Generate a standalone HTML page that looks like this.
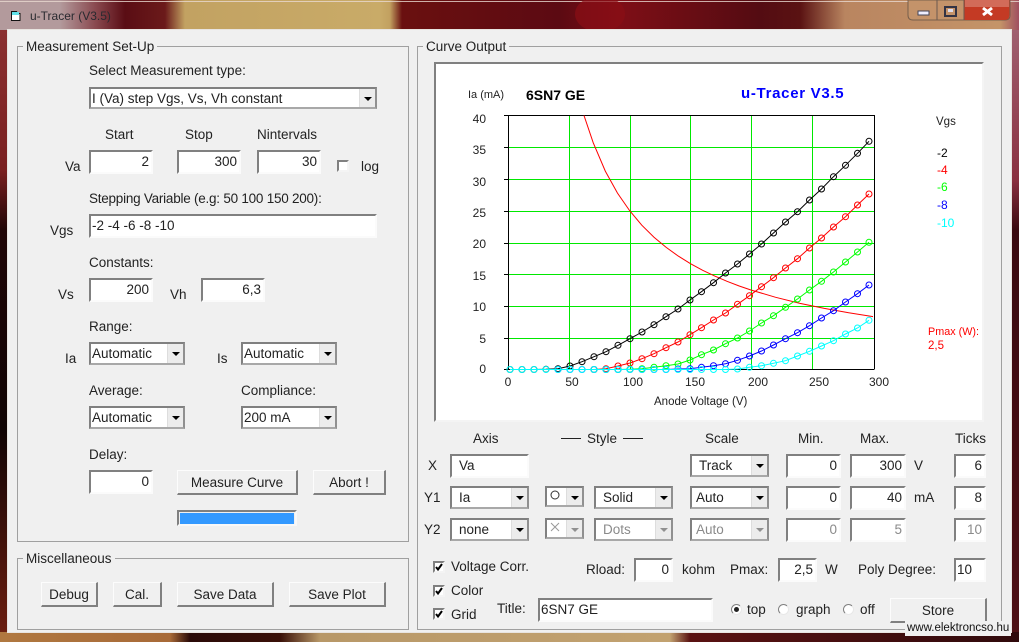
<!DOCTYPE html>
<html><head><meta charset="utf-8"><style>
html,body{margin:0;padding:0;background:#000}
#w{position:relative;width:1019px;height:642px;overflow:hidden;font-family:"Liberation Sans",sans-serif;font-size:13.5px;color:#222;
background:linear-gradient(90deg,#b39a9c 0,#b39a9c 60px,#8a4a50 95px,#5a0d14 125px,#6b1a1a 165px,#c2a262 185px,#c9ab68 380px,#c2a060 390px,#6a1010 402px,#5c0a12 560px,#7e0e16 620px,#540c12 760px,#5a1212 800px,#b98560 845px,#c49468 1000px,#a05060 1019px)}
#lb{position:absolute;left:0;top:30px;width:8px;height:612px;background:linear-gradient(180deg,#8a3030 0,#7a2020 140px,#200606 200px,#100404 400px,#6a1e10 600px,#b07040 642px)}
#rb{position:absolute;left:1011px;top:30px;width:8px;height:612px;background:linear-gradient(180deg,#a06070 0,#8a3040 150px,#3a0a10 200px,#501015 642px)}
#bb{position:absolute;left:0;top:632px;width:1019px;height:10px;background:linear-gradient(90deg,#b07840 0,#a86a38 170px,#2a0a08 190px,#3a1008 280px,#b89868 320px,#c2a270 670px,#5a1212 690px,#300a0c 1019px)}
#c{position:absolute;left:8px;top:30px;width:1003px;height:602px;background:#f0f0f0;box-shadow:0 0 0 1px #e8e4e0}
.t{position:absolute;white-space:nowrap;line-height:16px;margin-top:1px}
.g{position:absolute;box-sizing:border-box;border:1px solid #a0a0a0}
.l{position:absolute;background:#f0f0f0;padding:0 3px;line-height:16px;white-space:nowrap;margin-top:1px}
.i,.s{position:absolute;box-sizing:border-box;background:#fff;border:2px solid;border-color:#808080 #fbfbfb #fbfbfb #808080;line-height:19px;white-space:nowrap;overflow:hidden}
.i{text-align:right;padding-right:2px}
.s{border-color:#808080 #909090 #a8a8a8 #808080;padding-left:1px}
.b{position:absolute;right:0;top:0;bottom:0;width:16px;background:#ececec;border-left:1px solid #ddd;box-sizing:border-box}
.b:after{content:"";position:absolute;left:4px;top:8px;border:4px solid transparent;border-top:4px solid #000;border-bottom:0}
.d{color:#8a8a8a}.d .b:after{border-top-color:#909090}
.btn{position:absolute;box-sizing:border-box;background:#f0f0f0;border:1px solid;border-color:#fcfcfc #808080 #808080 #fcfcfc;border-width:1px 2px 2px 1px;text-align:center;line-height:23px;white-space:nowrap}
.cb{position:absolute;box-sizing:border-box;width:12px;height:12px;background:#fff;border:2px solid;border-color:#808080 #f4f4f4 #f4f4f4 #808080}
.r{position:absolute;box-sizing:border-box;width:11px;height:11px;border-radius:50%;background:#fff;border:1px solid;border-color:#808080 #e8e8e8 #e8e8e8 #808080}
.y{position:absolute;width:24px;text-align:right;left:462px;font-size:12px;line-height:14px}
.x{position:absolute;width:30px;text-align:center;top:375px;font-size:12px;line-height:14px}
</style></head><body><div id="w">
<div id="lb"></div><div id="rb"></div><div id="bb"></div>
<svg style="position:absolute;left:0;top:0" width="1019" height="30">
<path d="M0 1.5H1019" stroke="#e8d8d0" stroke-opacity=".8"/>
<path d="M11.5 11.5h5l1 2h2.5v7h-8.5z" fill="#fff" stroke="#111"/><rect x="12" y="12" width="7" height="3" fill="#5fe0e8"/>
<ellipse cx="600" cy="14" rx="25" ry="18" fill="#8a0e16" opacity=".7"/>
<path d="M908 0h102v15q0 5-5 5h-92q-5 0-5-5z" fill="#c4936a" stroke="#5a4a40" stroke-opacity=".7"/>
<path d="M964.5 0h45v15q0 5-5 5h-40z" fill="#c43a24"/><rect x="965" y="0" width="44" height="7" fill="#d88070" opacity=".7"/>
<path d="M937 0v20M964 0v20" stroke="#6a5a50"/>
<rect x="918" y="11" width="11" height="4" fill="#eef" stroke="#445"/>
<rect x="945" y="7" width="11" height="9" fill="none" stroke="#334" stroke-width="2"/><rect x="948" y="9" width="5" height="3" fill="#dde"/>
<path d="M983 8l9 7M992 8l-9 7" stroke="#fff" stroke-width="3"/>
</svg>
<div class="t" style="left:30px;top:7px;font-size:12px;color:#2a2a30">u-Tracer (V3.5)</div>
<div id="c"></div>

<div class="g" style="left:17px;top:46px;width:392px;height:496px"></div><div class="l" style="left:23px;top:38px">Measurement Set-Up</div>
<div class="g" style="left:17px;top:558px;width:392px;height:72px"></div><div class="l" style="left:23px;top:550px">Miscellaneous</div>
<div class="g" style="left:417px;top:46px;width:585px;height:584px"></div><div class="l" style="left:423px;top:38px">Curve Output</div>

<div class="t" style="left:89px;top:62px">Select Measurement type:</div>
<div class="s" style="left:89px;top:87px;width:288px;height:22px">I (Va) step Vgs, Vs, Vh constant<div class="b"></div></div>
<div class="t" style="left:105px;top:126px">Start</div><div class="t" style="left:185px;top:126px">Stop</div><div class="t" style="left:257px;top:126px">Nintervals</div>
<div class="t" style="left:65px;top:158px">Va</div>
<div class="i" style="left:89px;top:150px;width:64px;height:24px">2</div>
<div class="i" style="left:177px;top:150px;width:64px;height:24px">300</div>
<div class="i" style="left:257px;top:150px;width:64px;height:24px">30</div>
<div class="cb" style="left:337px;top:160px"></div><div class="t" style="left:361px;top:158px">log</div>
<div class="t" style="left:89px;top:190px;letter-spacing:-.24px">Stepping Variable (e.g: 50 100 150 200):</div>
<div class="t" style="left:50px;top:222px">Vgs</div>
<div class="i" style="left:89px;top:214px;width:288px;height:24px;text-align:left;padding-left:1px">-2 -4 -6 -8 -10</div>
<div class="t" style="left:89px;top:254px">Constants:</div>
<div class="t" style="left:58px;top:286px">Vs</div><div class="t" style="left:170px;top:286px">Vh</div>
<div class="i" style="left:89px;top:278px;width:64px;height:24px">200</div>
<div class="i" style="left:201px;top:278px;width:64px;height:24px">6,3</div>
<div class="t" style="left:89px;top:318px">Range:</div>
<div class="t" style="left:65px;top:350px">Ia</div><div class="t" style="left:217px;top:350px">Is</div>
<div class="s" style="left:89px;top:342px;width:96px;height:23px">Automatic<div class="b"></div></div>
<div class="s" style="left:241px;top:342px;width:96px;height:23px">Automatic<div class="b"></div></div>
<div class="t" style="left:89px;top:382px">Average:</div><div class="t" style="left:241px;top:382px">Compliance:</div>
<div class="s" style="left:89px;top:406px;width:96px;height:23px">Automatic<div class="b"></div></div>
<div class="s" style="left:241px;top:406px;width:96px;height:23px">200 mA<div class="b"></div></div>
<div class="t" style="left:89px;top:446px">Delay:</div>
<div class="i" style="left:89px;top:470px;width:64px;height:24px">0</div>
<div class="btn" style="left:177px;top:470px;width:121px;height:25px">Measure Curve</div>
<div class="btn" style="left:313px;top:470px;width:73px;height:25px">Abort !</div>
<div style="position:absolute;left:177px;top:510px;width:120px;height:16px;box-sizing:border-box;border:2px solid;border-color:#808080 #f8f8f8 #f8f8f8 #808080;background:#f0f0f0"><div style="position:absolute;left:1px;top:1px;width:114px;height:11px;background:#3399ff"></div></div>
<div class="btn" style="left:41px;top:582px;width:57px;height:25px">Debug</div>
<div class="btn" style="left:113px;top:582px;width:49px;height:25px">Cal.</div>
<div class="btn" style="left:177px;top:582px;width:97px;height:25px">Save Data</div>
<div class="btn" style="left:289px;top:582px;width:97px;height:25px">Save Plot</div>

<div style="position:absolute;left:434px;top:62px;width:550px;height:360px;box-sizing:border-box;background:#fff;border:2px solid;border-color:#808080 #f4f4f4 #f4f4f4 #808080"></div>
<svg style="position:absolute;left:0;top:0" width="1019" height="642">
<defs>
<marker id="mk" markerWidth="8" markerHeight="8" refX="4" refY="4" markerUnits="userSpaceOnUse"><circle cx="4" cy="4" r="3" fill="none" stroke="#000"/></marker>
<marker id="mr" markerWidth="8" markerHeight="8" refX="4" refY="4" markerUnits="userSpaceOnUse"><circle cx="4" cy="4" r="3" fill="none" stroke="#f00"/></marker>
<marker id="mg" markerWidth="8" markerHeight="8" refX="4" refY="4" markerUnits="userSpaceOnUse"><circle cx="4" cy="4" r="3" fill="none" stroke="#0f0"/></marker>
<marker id="mb" markerWidth="8" markerHeight="8" refX="4" refY="4" markerUnits="userSpaceOnUse"><circle cx="4" cy="4" r="3" fill="none" stroke="#00f"/></marker>
<marker id="mc" markerWidth="8" markerHeight="8" refX="4" refY="4" markerUnits="userSpaceOnUse"><circle cx="4" cy="4" r="3" fill="none" stroke="#0ff"/></marker>
</defs>
<g stroke="#00e800" fill="none" shape-rendering="crispEdges">
<path d="M569.5 116V369M630.5 116V369M690.5 116V369M751.5 116V369M812.5 116V369M508 147.5H874M508 179.5H874M508 211.5H874M508 243.5H874M508 274.5H874M508 306.5H874M508 338.5H874"/>
</g>
<path d="M508.5 116V369.5H874M508 115.5H874.5V369.5M504 147.5h4M504 179.5h4M504 211.5h4M504 243.5h4M504 274.5h4M504 306.5h4M504 338.5h4M504 369.5h4M504 115.5h4" fill="none" stroke="#000" shape-rendering="crispEdges"/>
<polyline fill="none" stroke="#f00" points="584,115.5 593.2,142.7 605.3,171.1 617.5,193.1 629.7,210.75 641.8,225.2 654,237.2 666.2,247.4 678.3,256.1 690.5,263.7 702.7,270.3 714.8,276.1 727,281.3 739.2,286 751.3,290.1 775.7,297.3 800,303.4 824.3,308.4 848.7,312.8 873,316.6"/>
<polyline fill="none" stroke="#000" marker-start="url(#mk)" marker-mid="url(#mk)" marker-end="url(#mk)" points="510,369.5 522,369.5 534,369.5 546,369.3 558,368.7 570,366 582,361.7 594,356.7 606,351.7 618,345.3 630,338.7 642,332 654,324.7 666,316.7 678,309 690,300 701.5,291.7 713.5,282.7 725.5,273 737.5,264 749.5,254 761.5,244 773.5,233 785.5,222 797.5,211.7 809.5,200 821.5,189 833.5,176.7 845.5,165.3 857.5,153.3 869,141.3"/>
<polyline fill="none" stroke="#f00" marker-start="url(#mr)" marker-mid="url(#mr)" marker-end="url(#mr)" points="594,369.5 606,368.7 618,366 630,363 642,358.7 654,353.7 666,347.7 678,342 690,334.7 701.5,327.7 713.5,320 725.5,313 737.5,304.3 749.5,295.7 761.5,286.7 773.5,277.7 785.5,268 797.5,258.7 809.5,248 821.5,238 833.5,227 845.5,216.7 857.5,205 869,194"/>
<polyline fill="none" stroke="#0f0" marker-start="url(#mg)" marker-mid="url(#mg)" marker-end="url(#mg)" points="594,369.5 606,369.5 618,369.5 630,369.2 642,368.7 654,367.3 666,365.7 678,364 690,360 701.5,354.7 713.5,350 725.5,343.7 737.5,338 749.5,331 761.5,323 773.5,315.7 785.5,307.3 797.5,299 809.5,290 821.5,281.3 833.5,272 845.5,262 857.5,252 869,242.3"/>
<polyline fill="none" stroke="#00f" marker-start="url(#mb)" marker-mid="url(#mb)" marker-end="url(#mb)" points="558,369.5 570,369.5 582,369.5 594,369.5 606,369.5 618,369.5 630,369.5 642,369.5 654,369.5 666,369.5 678,369 690,368.7 701.5,367.3 713.5,365.7 725.5,363.7 737.5,360.3 749.5,356 761.5,351 773.5,345 785.5,338.7 797.5,332.7 809.5,325.7 821.5,318 833.5,310.7 845.5,302 857.5,293.7 869,285"/>
<polyline fill="none" stroke="#0ff" marker-start="url(#mc)" marker-mid="url(#mc)" marker-end="url(#mc)" points="510,369.5 522,369.5 534,369.5 546,369.5 558,369.5 570,369.5 582,369.5 594,369.5 606,369.5 618,369.5 630,369.5 642,369.5 654,369.5 666,369.5 678,369.5 690,369.5 701.5,369.5 713.5,369.5 725.5,369.5 737.5,369 749.5,367.3 761.5,365.7 773.5,363.3 785.5,360.7 797.5,356 809.5,351.3 821.5,346 833.5,340.7 845.5,334 857.5,328 869,320.3"/>
</svg>
<div class="t" style="left:468px;top:86px;font-size:11px">Ia (mA)</div>
<div class="t" style="left:526px;top:86px;font-size:14px;font-weight:bold;color:#000">6SN7 GE</div>
<div class="t" style="left:741px;top:85px;font-size:15px;font-weight:bold;color:#0000ff;letter-spacing:.7px">u-Tracer V3.5</div>
<div class="y" style="top:112px">40</div><div class="y" style="top:143px">35</div><div class="y" style="top:175px">30</div><div class="y" style="top:206px">25</div><div class="y" style="top:237px">20</div><div class="y" style="top:269px">15</div><div class="y" style="top:300px">10</div><div class="y" style="top:332px">5</div><div class="y" style="top:362px">0</div>
<div class="x" style="left:493px">0</div><div class="x" style="left:557px">50</div><div class="x" style="left:618px">100</div><div class="x" style="left:680px">150</div><div class="x" style="left:743px">200</div><div class="x" style="left:804px">250</div><div class="x" style="left:864px">300</div>
<div class="t" style="left:654px;top:393px;font-size:11.5px">Anode Voltage (V)</div>
<div class="t" style="left:936px;top:113px;font-size:11.5px">Vgs</div>
<div class="t" style="left:937px;top:144px;font-size:12px;color:#000">-2</div>
<div class="t" style="left:937px;top:161px;font-size:12px;color:#f00">-4</div>
<div class="t" style="left:937px;top:178px;font-size:12px;color:#0f0">-6</div>
<div class="t" style="left:937px;top:196px;font-size:12px;color:#00f">-8</div>
<div class="t" style="left:937px;top:214px;font-size:12px;color:#0ff">-10</div>
<div class="t" style="left:928px;top:323px;font-size:10.8px;color:#f00">Pmax (W):</div>
<div class="t" style="left:928px;top:337px;font-size:11.5px;color:#f00">2,5</div>

<div class="t" style="left:473px;top:430px">Axis</div>
<div style="position:absolute;left:561px;top:438px;width:20px;height:1px;background:#222"></div><div class="t" style="left:587px;top:430px">Style</div><div style="position:absolute;left:623px;top:438px;width:20px;height:1px;background:#222"></div>
<div class="t" style="left:705px;top:430px">Scale</div><div class="t" style="left:798px;top:430px">Min.</div><div class="t" style="left:860px;top:430px">Max.</div><div class="t" style="left:955px;top:430px">Ticks</div>
<div class="t" style="left:428px;top:457px">X</div><div class="t" style="left:424px;top:489px">Y1</div><div class="t" style="left:424px;top:521px">Y2</div>
<div class="i" style="left:450px;top:454px;width:79px;height:24px;text-align:left;padding-left:7px">Va</div>
<div class="s" style="left:690px;top:454px;width:79px;height:23px;padding-left:7px">Track<div class="b"></div></div>
<div class="i" style="left:786px;top:454px;width:55px;height:24px">0</div>
<div class="i" style="left:850px;top:454px;width:56px;height:24px">300</div>
<div class="t" style="left:914px;top:457px">V</div>
<div class="i" style="left:954px;top:454px;width:32px;height:24px">6</div>

<div class="s" style="left:450px;top:486px;width:79px;height:23px;padding-left:7px">Ia<div class="b"></div></div>
<div class="s" style="left:545px;top:486px;width:39px;height:21px"><div class="b"></div>
<svg style="position:absolute;left:2px;top:1px" width="12" height="12"><circle cx="6" cy="6" r="4" fill="none" stroke="#333"/></svg></div>
<div class="s" style="left:594px;top:486px;width:79px;height:23px;padding-left:7px">Solid<div class="b"></div></div>
<div class="s" style="left:690px;top:486px;width:79px;height:23px;padding-left:4px">Auto<div class="b"></div></div>
<div class="i" style="left:786px;top:486px;width:55px;height:24px">0</div>
<div class="i" style="left:850px;top:486px;width:56px;height:24px">40</div>
<div class="t" style="left:914px;top:489px">mA</div>
<div class="i" style="left:954px;top:486px;width:32px;height:24px">8</div>

<div class="s" style="left:450px;top:518px;width:79px;height:23px;padding-left:7px">none<div class="b"></div></div>
<div class="s d" style="left:545px;top:518px;width:39px;height:21px"><div class="b"></div>
<svg style="position:absolute;left:2px;top:1px" width="12" height="12"><path d="M2 2l8 8M10 2l-8 8" fill="none" stroke="#999"/></svg></div>
<div class="s d" style="left:594px;top:518px;width:79px;height:23px;padding-left:7px">Dots<div class="b"></div></div>
<div class="s d" style="left:690px;top:518px;width:79px;height:23px;padding-left:4px">Auto<div class="b"></div></div>
<div class="i d" style="left:786px;top:518px;width:55px;height:24px">0</div>
<div class="i d" style="left:850px;top:518px;width:56px;height:24px">5</div>
<div class="i d" style="left:954px;top:518px;width:32px;height:24px">10</div>

<div class="cb" style="left:433px;top:561px"><svg style="position:absolute;left:0;top:0" width="8" height="8"><path d="M1 4l2 2.5L7 1" fill="none" stroke="#000" stroke-width="2"/></svg></div>
<div class="cb" style="left:433px;top:585px"><svg style="position:absolute;left:0;top:0" width="8" height="8"><path d="M1 4l2 2.5L7 1" fill="none" stroke="#000" stroke-width="2"/></svg></div>
<div class="cb" style="left:433px;top:608px"><svg style="position:absolute;left:0;top:0" width="8" height="8"><path d="M1 4l2 2.5L7 1" fill="none" stroke="#000" stroke-width="2"/></svg></div>
<div class="t" style="left:451px;top:558px">Voltage Corr.</div>
<div class="t" style="left:451px;top:582px">Color</div>
<div class="t" style="left:451px;top:606px">Grid</div>
<div class="t" style="left:586px;top:561px">Rload:</div>
<div class="i" style="left:634px;top:558px;width:39px;height:24px">0</div>
<div class="t" style="left:682px;top:561px">kohm</div>
<div class="t" style="left:730px;top:561px">Pmax:</div>
<div class="i" style="left:778px;top:558px;width:39px;height:24px">2,5</div>
<div class="t" style="left:825px;top:561px">W</div>
<div class="t" style="left:858px;top:561px">Poly Degree:</div>
<div class="i" style="left:954px;top:558px;width:32px;height:24px;text-align:left;padding-left:1px">10</div>
<div class="t" style="left:497px;top:600px">Title:</div>
<div class="i" style="left:538px;top:598px;width:175px;height:24px;text-align:left;padding-left:1px">6SN7 GE</div>
<div class="r" style="left:731px;top:604px"><div style="position:absolute;left:2px;top:2px;width:5px;height:5px;border-radius:50%;background:#222"></div></div>
<div class="t" style="left:747px;top:601px">top</div>
<div class="r" style="left:778px;top:604px"></div>
<div class="t" style="left:796px;top:601px">graph</div>
<div class="r" style="left:843px;top:604px"></div>
<div class="t" style="left:860px;top:601px">off</div>
<div class="btn" style="left:890px;top:598px;width:97px;height:25px">Store</div>
<div class="t" style="left:905px;top:620px;font-size:11.5px;color:#111;background:#f0f0f0;padding:0 2px;line-height:15px">www.elektroncso.hu</div>
</div></body></html>
